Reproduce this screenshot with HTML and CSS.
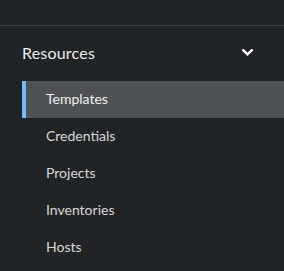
FILE: index.html
```html
<!DOCTYPE html>
<html>
<head>
<meta charset="utf-8">
<link rel="stylesheet" href="styles.css">
</head>
<body>
<nav class="nav">
  <div class="top"></div>
  <section class="group">
    <div class="group-toggle">
      <span class="group-title">Resources</span>
      <svg class="chev" width="11" height="7" viewBox="0 0 11 7"><path d="M1.2 1.2 L5.5 5.3 L9.8 1.2" fill="none" stroke="#fff" stroke-width="2.4" stroke-linecap="square"/></svg>
    </div>
    <ul class="items">
      <li class="item active">Templates</li>
      <li class="item">Credentials</li>
      <li class="item">Projects</li>
      <li class="item">Inventories</li>
      <li class="item">Hosts</li>
    </ul>
  </section>
</nav>
</body>
</html>
```
FILE: styles.css
```css
html, body {
  margin: 0;
  padding: 0;
  background: #212427;
  font-family: Lato, "Open Sans", sans-serif;
}
.nav {
  width: 284px;
  height: 271px;
  overflow: hidden;
}
.top {
  height: 25px;
  border-bottom: 1px solid #3c3f42;
}
.group-toggle {
  display: flex;
  align-items: center;
  justify-content: space-between;
  height: 55px;
  padding: 0 31px 3px 22px;
  box-sizing: border-box;
}
.group-title {
  color: #ededed;
  font-size: 16px;
  letter-spacing: 0.2px;
}
.chev { display: block; }
.items {
  list-style: none;
  margin: 0 0 0 22px;
  padding: 0;
}
.item {
  height: 37px;
  line-height: 35px;
  padding-bottom: 2px;
  box-sizing: border-box;
  padding-left: 24px;
  color: #d8d8d8;
  font-size: 14px;
}
.item.active {
  background: #4f5255;
  border-left: 4px solid #73bcf7;
  padding-left: 20px;
  color: #f0f0f0;
}
```
